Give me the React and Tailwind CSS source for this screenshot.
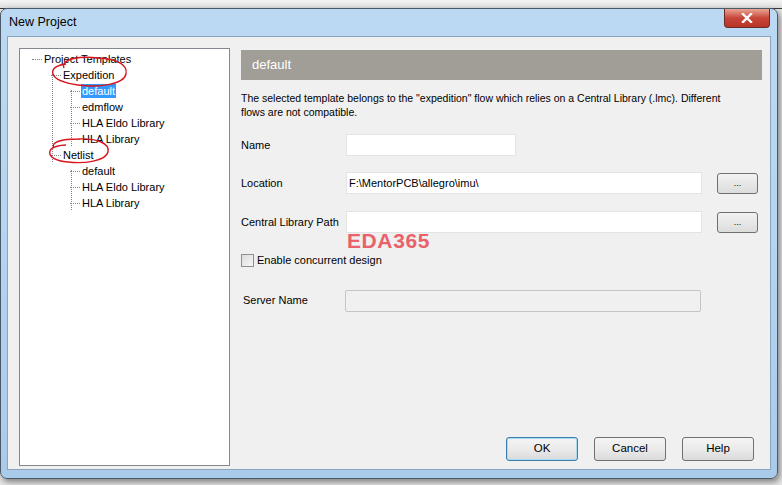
import { useState } from "react";

const tree = [
  { label: "Project Templates", level: 0 },
  { label: "Expedition", level: 1 },
  { label: "default", level: 2, selected: true },
  { label: "edmflow", level: 2 },
  { label: "HLA Eldo Library", level: 2 },
  { label: "HLA Library", level: 2 },
  { label: "Netlist", level: 1 },
  { label: "default", level: 2 },
  { label: "HLA Eldo Library", level: 2 },
  { label: "HLA Library", level: 2 },
];

const font = { fontFamily: '"Liberation Sans", Arial, sans-serif' };

function TreeRow({ item }) {
  const indent = { 0: "pl-[12px]", 1: "pl-[31px]", 2: "pl-[50px]" }[item.level];
  return (
    <div className={`relative flex h-[16px] items-center ${indent}`}>
      <span className="mr-[1px] w-[10px] border-t border-dotted border-[#808080]" />
      <span
        className={
          item.selected
            ? "bg-[#3399ff] px-[1px] leading-[14px] text-white"
            : "px-[1px] leading-[14px] text-black"
        }
      >
        {item.label}
      </span>
    </div>
  );
}

function Field({ label, children, className = "" }) {
  return (
    <div className={`flex items-center ${className}`}>
      <div className="w-[105px] shrink-0 text-[11px] text-black">{label}</div>
      {children}
    </div>
  );
}

function BrowseButton() {
  return (
    <button className="ml-[15px] h-[21px] w-[41px] rounded-[3px] border border-[#707070] bg-gradient-to-b from-[#f2f2f2] to-[#dcdcdc] text-[9px] leading-none text-black">
      ...
    </button>
  );
}

function DialogButton({ children, focused }) {
  return (
    <button
      className={
        "h-[24px] w-[72px] rounded-[3px] border bg-gradient-to-b from-[#f4f4f4] via-[#ebebeb] to-[#dadada] text-[11.5px] text-black " +
        (focused ? "border-[#3c7fb1] shadow-[inset_0_0_0_1px_#a7d8f4]" : "border-[#707070]")
      }
    >
      {children}
    </button>
  );
}

export default function App() {
  const [concurrent, setConcurrent] = useState(false);

  return (
    <div className="relative h-[485px] w-[782px] overflow-hidden bg-[#e6e6e6]" style={font}>
      {/* desktop strip behind the dialog */}
      <div className="h-[9px] border-b border-[#3a3a3a] bg-gradient-to-b from-[#f4f4f4] to-[#dedede]" />

      {/* dialog window */}
      <div className="absolute left-0 top-[8px] h-[471px] w-[778px] rounded-[7px] border border-[#4b5a68] bg-gradient-to-b from-[#bcd9f3] via-[#b4d4f1] to-[#a9cbe9] shadow-[2px_3px_6px_rgba(0,0,0,0.45)]">
        {/* title bar */}
        <div className="relative flex h-[27px] items-center pl-[8px]">
          <span className="text-[12.5px] text-black">New Project</span>
          <div className="absolute right-[7px] top-0 flex h-[19px] w-[46px] items-center justify-center rounded-b-[4px] border border-t-0 border-[#6b2a22] bg-gradient-to-b from-[#e8a493] via-[#c7453a] to-[#b83426]">
            <svg width="12" height="10" viewBox="0 0 12 10">
              <path d="M2 1 L10 9 M10 1 L2 9" stroke="#fff" strokeWidth="2.4" strokeLinecap="square" />
            </svg>
          </div>
        </div>

        {/* client area */}
        <div className="mx-[6px] flex h-[434px] border border-[#8aa4bf] bg-[#f0f0f0]">
          {/* tree */}
          <div className="relative ml-[11px] mt-[11px] h-[418px] w-[211px] shrink-0 border border-[#828790] bg-white pt-[2px] text-[11px]">
            {/* connector lines */}
            <div className="absolute left-[32px] top-[25px] h-[88px] border-l border-dotted border-[#808080]" />
            <div className="absolute left-[51px] top-[41px] h-[56px] border-l border-dotted border-[#808080]" />
            <div className="absolute left-[51px] top-[121px] h-[40px] border-l border-dotted border-[#808080]" />
            {tree.map((item, i) => (
              <TreeRow key={i} item={item} />
            ))}
            {/* hand-drawn marks */}
            <svg className="absolute left-0 top-0" width="211" height="140" viewBox="0 0 211 140">
              <path
                d="M44 19 C40 9 62 7 78 9 C96 10 108 15 106 25 C104 35 80 39 58 36 C44 34 35 31 33 25 C31 19 38 16 46 15"
                fill="none"
                stroke="#d8141d"
                strokeWidth="1.4"
              />
              <path
                d="M34 99 C30 93 42 90 58 90 C76 89 90 94 88 103 C86 112 64 115 48 113 C36 112 28 108 30 102 C31 98 40 96 46 96"
                fill="none"
                stroke="#d8141d"
                strokeWidth="1.4"
              />
            </svg>
          </div>

          {/* details */}
          <div className="relative ml-[11px] mr-[8px] mt-[13px] flex flex-1 flex-col">
            <div className="flex h-[30px] items-center bg-[#a19e97] pl-[11px] text-[13px] text-white">default</div>

            <p className="mt-[11px] text-[10.5px] leading-[14px] text-black">
              The selected template belongs to the "expedition" flow which relies on a Central Library (.lmc). Different
              <br />
              flows are not compatible.
            </p>

            <Field label="Name" className="mt-[15px]">
              <div className="h-[22px] w-[170px] border border-[#e3e3e3] bg-white" />
            </Field>

            <Field label="Location" className="mt-[16px]">
              <div className="flex h-[22px] w-[356px] items-center border border-[#e3e3e3] bg-white pl-[2px] text-[11px]">
                F:\MentorPCB\allegro\imu\
              </div>
              <BrowseButton />
            </Field>

            <Field label="Central Library Path" className="mt-[17px]">
              <div className="h-[22px] w-[356px] border border-[#e3e3e3] bg-white" />
              <BrowseButton />
            </Field>

            <label className="mt-[19px] flex items-center text-[11px]">
              <input
                type="checkbox"
                checked={concurrent}
                onChange={(e) => setConcurrent(e.target.checked)}
                className="m-0 h-[13px] w-[13px] appearance-none border border-[#8f8f8f] bg-gradient-to-br from-[#dcdcdc] to-[#f6f6f6]"
              />
              <span className="ml-[3px]">Enable concurrent design</span>
            </label>

            <Field label="Server Name" className="mt-[21px] pl-[2px]">
              <div className="-ml-[3px] h-[22px] w-[356px] rounded-[2px] border border-[#c5c5c5] bg-[#f0f0f0]" />
            </Field>

            {/* watermark */}
            <div className="absolute left-[106px] top-[180px] text-[21px] font-bold leading-none tracking-[0.6px] text-[#e9616a]">
              EDA365
            </div>

            <div className="mt-auto mb-[8px] flex justify-end gap-[16px] pr-[8px]">
              <DialogButton focused>OK</DialogButton>
              <DialogButton>Cancel</DialogButton>
              <DialogButton>Help</DialogButton>
            </div>
          </div>
        </div>
      </div>
    </div>
  );
}
